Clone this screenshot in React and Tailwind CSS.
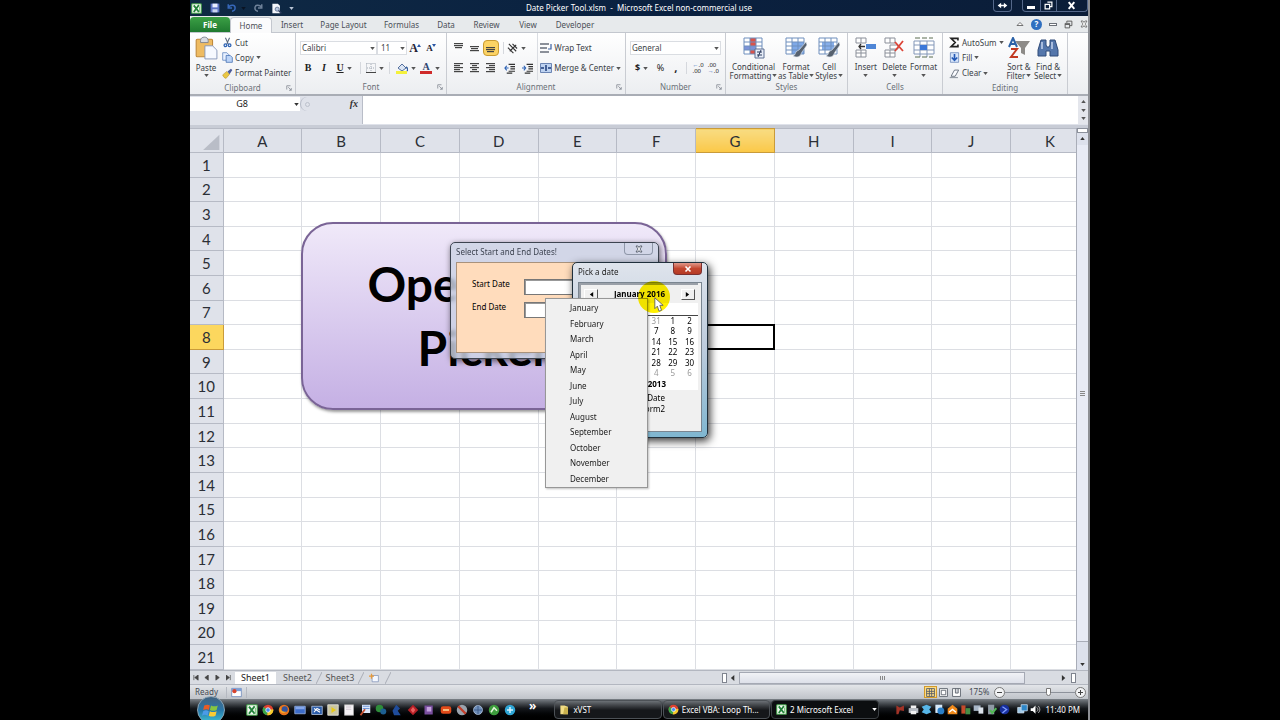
import React from "react";

const COLUMNS = ["A", "B", "C", "D", "E", "F", "G", "H", "I", "J", "K"];
const ROWS = Array.from({ length: 21 }, (_, i) => i + 1);
const MONTHS = [
  "January", "February", "March", "April", "May", "June",
  "July", "August", "September", "October", "November", "December",
];
const WEEKS = [
  [27, 28, 29, 30, 31, 1, 2],
  [3, 4, 5, 6, 7, 8, 9],
  [10, 11, 12, 13, 14, 15, 16],
  [17, 18, 19, 20, 21, 22, 23],
  [24, 25, 26, 27, 28, 29, 30],
  [31, 1, 2, 3, 4, 5, 6],
];

function Caret({ className = "text-[#555]" }) {
  return (
    <svg viewBox="0 0 6 4" className={`h-[3px] w-[5px] shrink-0 ${className}`} aria-hidden="true">
      <path d="M0 0h6L3 4z" fill="currentColor" />
    </svg>
  );
}

function Svg({ size = "size-3", box = 16, children }) {
  return (
    <svg viewBox={`0 0 ${box} ${box}`} className={`${size} shrink-0`} aria-hidden="true" fill="none">
      {children}
    </svg>
  );
}

function ExcelIcon({ size = "size-3" }) {
  return (
    <Svg size={size}>
      <rect x="1" y="1" width="14" height="14" rx="1" fill="#f4fbf2" stroke="#3f9a46" strokeWidth="1.5" />
      <path d="M4 3.5l7.5 9.5M11.5 3L4 13" stroke="#22823a" strokeWidth="2.6" />
      <path d="M12.5 5v8" stroke="#7cc27d" strokeWidth="1.5" />
    </Svg>
  );
}

function SmallButton({ icon, label, caret }) {
  return (
    <button className="flex h-4 items-center gap-[2px] whitespace-nowrap">
      {icon}
      <span>{label}</span>
      {caret && <Caret />}
    </button>
  );
}

function IconButton({ label, width = "w-4", active, children }) {
  return (
    <button
      aria-label={label}
      className={`flex h-4 ${width} items-center justify-center gap-[3px] ${
        active ? "rounded-sm border border-[#c99b32] bg-[#fcd364]" : ""
      }`}
    >
      {children}
    </button>
  );
}

function BigButton({ icon, lines, width }) {
  return (
    <button className={`flex ${width} flex-col items-center`}>
      <span className="flex h-[29px] items-center pt-px">{icon}</span>
      {lines.map((line, i) => (
        <span key={i} className="flex h-[9px] items-center gap-px whitespace-nowrap leading-[9px]">
          {line}
          {i === 1 && <Caret />}
        </span>
      ))}
    </button>
  );
}

function Group({ title, width, launcher, children }) {
  return (
    <section className={`flex ${width} shrink-0 flex-col border-r border-[#c9ccd2]`}>
      <div className="flex h-[48px] px-1">{children}</div>
      <div className="relative flex h-[14px] items-center justify-center text-[#6b7078]">
        {title}
        {launcher && (
          <button aria-label={`${title} settings`} className="absolute right-[3px] top-1">
            <Svg size="size-[6px]" box={8}>
              <path d="M1 6V1h5M3 3l4 4M7 4v3H4" stroke="#7c828c" />
            </Svg>
          </button>
        )}
      </div>
    </section>
  );
}

function Lines({ rows }) {
  return (
    <Svg size="size-[10px]" box={10}>
      {rows.map(([x, y, w], i) => (
        <rect key={i} x={x} y={y} width={w} height="1.2" fill="#444" />
      ))}
    </Svg>
  );
}

function TitleBar() {
  return (
    <header className="flex h-4 items-start justify-between bg-gradient-to-r from-[#0f2944] via-[#0a2140] to-[#0b1d38] text-white">
      <div className="flex h-4 w-[110px] items-center gap-[7px] pl-px">
        <ExcelIcon size="size-[11px]" />
        <button aria-label="Save" className="ml-px">
          <Svg size="size-[10px]">
            <path d="M1 1h14v14H1z" fill="#5b74c4" />
            <path d="M4 1h8v6H4z" fill="#e8efff" />
            <path d="M4 10h8v5H4z" fill="#c9d4ee" />
          </Svg>
        </button>
        <button aria-label="Undo" className="flex items-center gap-1">
          <Svg size="size-[10px]">
            <path d="M2 7c4-5 11-4 11 1 0 3-2 5-5 5M2 2v6h6" stroke="#3667b8" strokeWidth="2.4" />
          </Svg>
          <Caret className="text-[#0a1322]" />
        </button>
        <button aria-label="Redo" className="flex items-center gap-1">
          <Svg size="size-[10px]">
            <path d="M14 7C10 2 3 3 3 8c0 3 2 5 5 5M14 2v6H8" stroke="#6d8098" strokeWidth="2.4" />
          </Svg>
        </button>
        <button aria-label="Print preview" className="ml-px">
          <Svg size="size-[11px]">
            <path d="M2 1h8l3 3v11H2z" fill="#f2f5fb" />
            <circle cx="9" cy="9" r="3" fill="#b8c7de" stroke="#44597d" />
            <path d="M11 11l4 4" stroke="#2c3d5d" strokeWidth="2" />
          </Svg>
        </button>
        <Caret className="text-[#b9c4d4]" />
      </div>
      <h1 className="leading-4">Date Picker Tool.xlsm&nbsp; -&nbsp; Microsoft Excel non-commercial use</h1>
      <div className="flex w-[110px] justify-end">
        <button aria-label="Resize" className="mr-[10px] flex h-3 w-[19px] items-center justify-center rounded-b border border-t-0 border-[#55688a]">
          <Svg size="size-[11px]">
            <path d="M1 8l5-4v3h4V4l5 4-5 4V9H6v3z" fill="#fff" />
          </Svg>
        </button>
        <button aria-label="Minimize" className="flex h-3 w-[19px] items-center justify-center rounded-bl border border-t-0 border-[#55688a]">
          <span className="mt-1 h-[3px] w-2 bg-white" />
        </button>
        <button aria-label="Restore" className="flex h-3 w-[15px] items-center justify-center border-b border-[#55688a]">
          <Svg size="size-[9px]">
            <path d="M6 2h8v8h-3M2 6h8v8H2z" stroke="#fff" strokeWidth="2.2" />
          </Svg>
        </button>
        <button aria-label="Close" className="flex h-3 w-[32px] items-center justify-center rounded-br border border-t-0 border-[#55688a]">
          <Svg size="size-[9px]">
            <path d="M3 2l10 12M13 2L3 14" stroke="#fff" strokeWidth="3.4" />
          </Svg>
        </button>
      </div>
    </header>
  );
}

function RibbonTabs() {
  const tabs = [
    ["Insert", "w-[40px]"], ["Page Layout", "w-[63px]"], ["Formulas", "w-[53px]"], ["Data", "w-[36px]"],
    ["Review", "w-[45px]"], ["View", "w-[38px]"], ["Developer", "w-[56px]"],
  ];
  return (
    <nav className="flex h-[17px] items-end border-b border-[#c3c7ce] bg-[#e7eaec] text-[#4a4f57]">
      <button className="h-[15px] w-10 rounded-t-sm bg-gradient-to-b from-[#3ba045] to-[#1f7a30] font-bold text-white">File</button>
      <button className="-mb-px h-4 w-[42px] rounded-t-sm border border-b-0 border-[#c3c7ce] bg-[#fbfbfc]">Home</button>
      {tabs.map(([label, width]) => (
        <button key={label} className={`h-[15px] ${width} whitespace-nowrap`}>{label}</button>
      ))}
      <div className="ml-auto flex h-4 items-center gap-[7px]">
        <button aria-label="Collapse ribbon">
          <Svg size="size-[8px]"><path d="M2 11l6-6 6 6H2z" stroke="#555" strokeWidth="1.6" fill="#fff" /></Svg>
        </button>
        <button aria-label="Help" className="flex size-[11px] items-center justify-center rounded-full bg-[#2f6fc0] text-[8px] font-bold text-white">?</button>
        <button aria-label="Minimize workbook" className="h-[3px] w-2 border border-[#6b7078] bg-white" />
        <button aria-label="Restore workbook">
          <Svg size="size-[9px]"><path d="M5 5V2h9v8h-4M2 6h8v8H2zM2 8h8" stroke="#555" strokeWidth="1.6" /></Svg>
        </button>
        <button aria-label="Close workbook">
          <Svg size="size-[8px]"><path d="M2 2h4l2 3 2-3h4l-4 6 4 6h-4l-2-3-2 3H2l4-6z" stroke="#555" strokeWidth="1.4" fill="#fff" /></Svg>
        </button>
      </div>
    </nav>
  );
}

function GridIcon({ fill, children }) {
  return (
    <Svg size="size-[22px]" box={22}>
      <rect x="1" y="1" width="18" height="16" fill="#fff" />
      {fill}
      <path d="M1 1h18v16H1zM1 5h18M1 9h18M1 13h18M7 1v16M13 1v16" stroke="#6f8fbd" />
      {children}
    </Svg>
  );
}

const Brush = () => (
  <path d="M21 5l-7 8-2 1c-2 1-1 4-4 5 4 2 7 1 8-2l1-2 5-7z" fill="#56616f" stroke="#dfe5ee" strokeWidth=".6" />
);

const ALIGN = {
  top: [[0, 0, 9], [0, 2, 9], [1, 4, 7]],
  middle: [[0, 3, 9], [1, 5, 7], [0, 7, 9]],
  bottom: [[0, 4, 9], [0, 6, 9], [1, 8, 7]],
  left: [[0, 0, 9], [0, 2, 6], [0, 4, 9], [0, 6, 6], [0, 8, 9]],
  center: [[0, 0, 9], [2, 2, 5], [0, 4, 9], [2, 6, 5], [0, 8, 9]],
  right: [[0, 0, 9], [3, 2, 6], [0, 4, 9], [3, 6, 6], [0, 8, 9]],
};

function Ribbon() {
  return (
    <div className="flex h-[63px] overflow-hidden border-b-2 border-[#a9adb5] bg-gradient-to-b from-white to-[#eceef1] text-[#3b3f46]">
      <Group title="Clipboard" width="w-[106px]" launcher>
        <button className="flex w-[27px] flex-col items-center">
          <span className="flex h-[30px] items-center">
            <Svg size="size-[24px]" box={22}>
              <rect x="2" y="3" width="15" height="16" rx="1" fill="#eebb62" stroke="#c08a3c" />
              <path d="M6 4c0-4 7-4 7 0v2H6z" fill="#d7dae0" stroke="#7d828c" strokeWidth=".8" />
              <path d="M10 9h7l4 4v8H10z" fill="#f6f9ff" stroke="#7e90b4" strokeWidth=".8" />
            </Svg>
          </span>
          <span className="leading-[9px]">Paste</span>
          <span className="pt-[2px]"><Caret /></span>
        </button>
        <div className="flex flex-col pl-[4px] pt-[2px]">
          <SmallButton label="Cut" icon={
            <Svg size="size-[11px]">
              <path d="M5 1l4 9M11 1L7 10" stroke="#5a6a80" strokeWidth="1.6" />
              <circle cx="5" cy="12" r="2" stroke="#2e63b3" strokeWidth="1.8" />
              <circle cx="11" cy="12" r="2" stroke="#2e63b3" strokeWidth="1.8" />
            </Svg>} />
          <SmallButton label="Copy" caret icon={
            <Svg size="size-[11px]">
              <path d="M1 1h6l3 3v8H1z" fill="#e7f0ff" stroke="#4c77b8" />
              <path d="M6 5h6l3 3v7H6z" fill="#bcd4f7" stroke="#2f5fa8" />
            </Svg>} />
          <SmallButton label="Format Painter" icon={
            <Svg size="size-[11px]">
              <path d="M1 10l6-5 4 4-5 6c-2 0-4-2-5-5z" fill="#eac845" stroke="#b6902a" strokeWidth=".8" />
              <path d="M8 5l5-4 2 2-4 6z" fill="#4a5b9a" />
            </Svg>} />
        </div>
      </Group>

      <Group title="Font" width="w-[151px]" launcher>
        <div className="flex flex-col gap-1 pt-[7px]">
          <div className="flex items-center">
            <label className="relative flex h-[14px] w-[77px] items-center justify-end border border-[#dadde2] bg-white pr-px">
              <select aria-label="Font" className="absolute inset-0 appearance-none bg-transparent pl-px leading-3">
                <option>Calibri</option>
              </select>
              <Caret />
            </label>
            <label className="relative flex h-[14px] w-[30px] items-center justify-end border border-[#dadde2] bg-white pr-px">
              <select aria-label="Font size" className="absolute inset-0 appearance-none bg-transparent pl-[3px] leading-3">
                <option>11</option>
              </select>
              <Caret />
            </label>
            <IconButton label="Grow font"><b className="font-['Liberation_Serif',serif] text-[12px] text-[#223]">A</b><span className="-ml-1 mb-1"><Svg size="size-1" box={4}><path d="M0 3l2-3 2 3z" fill="#2b57a5" /></Svg></span></IconButton>
            <IconButton label="Shrink font"><b className="font-['Liberation_Serif',serif] text-[9px] text-[#223]">A</b><span className="-ml-1 mb-1"><Svg size="size-1" box={4}><path d="M0 0l2 3 2-3z" fill="#2b57a5" /></Svg></span></IconButton>
          </div>
          <div className="flex items-center text-[#222]">
            <IconButton label="Bold" width="w-4"><b className="font-['Liberation_Serif',serif] text-[10px]">B</b></IconButton>
            <IconButton label="Italic" width="w-4"><b className="font-['Liberation_Serif',serif] text-[10px] italic">I</b></IconButton>
            <IconButton label="Underline" width="w-6"><b className="font-['Liberation_Serif',serif] text-[10px] underline">U</b><Caret /></IconButton>
            <span className="ml-1 mr-1 h-3 w-px bg-[#d5d8dd]" />
            <IconButton label="Borders" width="w-5">
              <Svg size="size-[10px]" box={10}>
                <path d="M.5 .5h9v9M.5.5v9M5 1v8M1 5h8" stroke="#a3aab5" strokeDasharray="1 1" />
                <path d="M0 9.5h10" stroke="#444" />
              </Svg>
              <Caret />
            </IconButton>
            <span className="ml-1 mr-1 h-3 w-px bg-[#d5d8dd]" />
            <IconButton label="Fill color" width="w-6">
              <Svg size="size-[12px]" box={12}>
                <path d="M2 6l4-4 4 4-4 3z" fill="#dce6f4" stroke="#54709e" />
                <path d="M10 5c2 1 2 3 1 4" stroke="#35609f" strokeWidth="1.4" />
                <path d="M0 9h11v3H0z" fill="#f4f13c" />
              </Svg>
              <Caret />
            </IconButton>
            <IconButton label="Font color" width="w-6">
              <span className="flex w-3 flex-col items-center border-b-[3px] border-[#cf2a2a] font-['Liberation_Serif',serif] text-[10px] font-bold leading-[9px] text-[#2d4470]">A</span>
              <Caret />
            </IconButton>
          </div>
        </div>
      </Group>

      <Group title="Alignment" width="w-[179px]" launcher>
        <div className="flex w-[88px] flex-col gap-1 border-r border-[#dadde2] pt-[7px]">
          <div className="flex items-center">
            <IconButton label="Top align"><Lines rows={ALIGN.top} /></IconButton>
            <IconButton label="Middle align"><Lines rows={ALIGN.middle} /></IconButton>
            <IconButton label="Bottom align" active><Lines rows={ALIGN.bottom} /></IconButton>
            <span className="ml-1 mr-1 h-3 w-px bg-[#d5d8dd]" />
            <IconButton label="Orientation" width="w-4">
              <Svg size="size-[11px]" box={12}>
                <path d="M2 1l8 8M1 5l6 6M6 1l5 5M3 9L10 2" stroke="#333" strokeWidth="1.2" />
              </Svg>
              <Caret />
            </IconButton>
          </div>
          <div className="flex items-center">
            <IconButton label="Align left"><Lines rows={ALIGN.left} /></IconButton>
            <IconButton label="Align center"><Lines rows={ALIGN.center} /></IconButton>
            <IconButton label="Align right"><Lines rows={ALIGN.right} /></IconButton>
            <IconButton label="Decrease indent" width="w-5"><Svg size="size-[11px]" box={12}><path d="M5 1.5h7M7 4h5M7 6.5h5M5 9h7M3 11h6" stroke="#333" strokeWidth="1.3" /><path d="M5 5.5H1M3 3L1 5.5 3 8" stroke="#2c62b5" strokeWidth="1.2" /></Svg></IconButton>
            <IconButton label="Increase indent"><Svg size="size-[11px]" box={12}><path d="M5 1.5h7M7 4h5M7 6.5h5M5 9h7M3 11h6" stroke="#333" strokeWidth="1.3" /><path d="M0 5.5h4M2 3l2 2.5L2 8" stroke="#2c62b5" strokeWidth="1.2" /></Svg></IconButton>
          </div>
        </div>
        <div className="flex flex-col gap-1 pl-[2px] pt-[7px]">
          <SmallButton label="Wrap Text" icon={
            <Svg size="size-[12px]" box={12}>
              <path d="M0 1h9v2H0zM0 5h7v2H0zM0 9h9v2H0z" fill="#8b9099" />
              <path d="M11 2v5H8" stroke="#3a62a4" strokeWidth="1.2" />
            </Svg>} />
          <SmallButton label="Merge & Center" caret icon={
            <Svg size="size-[12px]" box={12}>
              <path d="M.5 1.5h11v9H.5z" fill="#bdd2f0" stroke="#6b85b3" />
              <path d="M1 6h3M8 6h3M6 3v6" stroke="#1d3c7a" strokeWidth="1.5" />
            </Svg>} />
        </div>
      </Group>

      <Group title="Number" width="w-[100px]" launcher>
        <div className="flex w-full flex-col gap-1 pt-[7px]">
          <div className="flex h-4 items-center">
            <label className="relative flex h-[14px] w-[92px] items-center justify-end border border-[#dadde2] bg-white pr-px">
              <select aria-label="Number format" className="absolute inset-0 appearance-none bg-transparent pl-px leading-3">
                <option>General</option>
              </select>
              <Caret />
            </label>
          </div>
          <div className="flex items-center text-[#222]">
            <IconButton label="Currency" width="w-6"><b className="text-[9px]">$</b><Caret /></IconButton>
            <IconButton label="Percent"><span className="text-[9px]">%</span></IconButton>
            <IconButton label="Comma style"><b className="text-[11px] leading-3">,</b></IconButton>
            <span className="mx-[3px] h-3 w-px bg-[#d5d8dd]" />
            <IconButton label="Increase decimal"><span className="text-left text-[6px] leading-[6px]"><span className="text-[#2c62b5]">←</span>.0<br />.00</span></IconButton>
            <IconButton label="Decrease decimal"><span className="text-left text-[6px] leading-[6px]">.00<br /><span className="text-[#2c62b5]">→</span>.0</span></IconButton>
          </div>
        </div>
      </Group>

      <Group title="Styles" width="w-[122px]">
        <BigButton width="w-[47px]" lines={["Conditional", "Formatting"]} icon={
          <GridIcon fill={<><path d="M7 1h6v16H7z" fill="#d9534a" /><path d="M1 9h12v4H1z" fill="#7b92d8" /></>}>
            <path d="M12 12h9v9h-9z" fill="#e7edf8" stroke="#5f7093" />
            <path d="M14 15h5M14 18h5M18 13l-3 7" stroke="#2d3c5e" />
          </GridIcon>} />
        <BigButton width="w-[39px]" lines={["Format", "as Table"]} icon={
          <GridIcon fill={<path d="M7 5h12v12H7z" fill="#7fa9e8" />}><Brush /></GridIcon>} />
        <BigButton width="w-[28px]" lines={["Cell", "Styles"]} icon={
          <GridIcon fill={<path d="M4 5h12v8H4z" fill="#86aeea" />}><Brush /></GridIcon>} />
      </Group>

      <Group title="Cells" width="w-[95px]">
        <BigButton width="w-[28px]" lines={["Insert", ""]} icon={
          <Svg size="size-[22px]" box={22}>
            <path d="M1 1h10v5H1zM6 1v5M1 13h10v7H1zM6 13v7M1 16h10" stroke="#8a8f99" fill="#fff" />
            <path d="M11 7h10v5H11z" fill="#4f86d6" />
            <path d="M10 9.5H4M6 7L4 9.5 6 12" stroke="#333" strokeWidth="1.3" />
          </Svg>} />
        <BigButton width="w-[30px]" lines={["Delete", ""]} icon={
          <Svg size="size-[22px]" box={22}>
            <path d="M1 1h10v5H1zM6 1v5M1 13h10v7H1zM6 13v7M1 16h10M6 8h8v4H6z" stroke="#8a8f99" fill="#fff" />
            <path d="M11 5l8 9M19 4l-8 10" stroke="#dc4437" strokeWidth="1.8" />
          </Svg>} />
        <BigButton width="w-[29px]" lines={["Format", ""]} icon={
          <Svg size="size-[22px]" box={22}>
            <path d="M1 4h20v13H1zM1 8h20M1 13h20M7 4v16M14 4v16" stroke="#8397b8" fill="#fff" />
            <path d="M7 8h7v5H7z" fill="#3c78d8" />
            <path d="M2 1h18M2 20h18" stroke="#5b6c50" strokeDasharray="5 2" />
          </Svg>} />
      </Group>

      <Group title="Editing" width="w-[125px]">
        <div className="flex w-[58px] flex-col pl-[2px] pt-[2px]">
          <SmallButton label="AutoSum" caret icon={<Svg size="size-[11px]"><path d="M13 5V2H3l6 6-6 6h10v-3" stroke="#222" strokeWidth="2.4" /></Svg>} />
          <SmallButton label="Fill" caret icon={
            <Svg size="size-[11px]">
              <path d="M2 1h12v14H2z" fill="#d6e5fb" stroke="#5a7ab0" />
              <path d="M8 3v7M4 8l4 4 4-4" stroke="#2359b5" strokeWidth="2.4" />
            </Svg>} />
          <SmallButton label="Clear" caret icon={
            <Svg size="size-[11px]">
              <path d="M8 3h6l-5 9H3z" fill="#fbfcff" stroke="#56616f" strokeWidth="1.2" />
              <path d="M1 14h12" stroke="#56616f" />
            </Svg>} />
        </div>
        <BigButton width="w-[29px]" lines={["Sort &", "Filter"]} icon={
          <Svg size="size-[22px]" box={22}>
            <path d="M7 4h15l-5 7v7l-4-2v-5z" fill="#8d8b88" />
            <path d="M1 10L5 1l4 9M3 7h5" stroke="#2c62a8" strokeWidth="2" />
            <path d="M3 12h6l-6 8h7" stroke="#c23a22" strokeWidth="2" />
          </Svg>} />
        <BigButton width="w-[30px]" lines={["Find &", "Select"]} icon={
          <Svg size="size-[22px]" box={22}>
            <path d="M4 3h5v5l1 2h2l1-2V3h5l3 10v6h-8v-5H9v5H1v-6z" fill="#5476ab" stroke="#2f4a78" />
            <path d="M5 5v7M15 5v7" stroke="#c3d4ee" strokeWidth="1.5" />
          </Svg>} />
      </Group>
    </div>
  );
}

function FormulaBar() {
  return (
    <div className="flex h-8 items-start border-b-[3px] border-[#c8ccd6] bg-[#dfe2ea]">
      <label className="mt-px flex h-[14px] w-[110px] shrink-0 items-center bg-white pr-px">
        <input aria-label="Name box" defaultValue="G8" className="w-0 flex-1 bg-transparent text-center text-[9px] text-[#222]" />
        <Caret className="text-[#333]" />
      </label>
      <div className="mt-px flex h-[14px] w-[62px] shrink-0 items-center justify-between rounded-l-lg border-l border-[#b4b9c5] px-1">
        <span className="size-[5px] rounded-full border border-[#bcc1cc]" />
        <button aria-label="Insert function" className="font-['Liberation_Serif',serif] text-[10px] font-bold italic text-[#333]">fx</button>
      </div>
      <textarea aria-label="Formula" className="h-[28px] flex-1 resize-none border-l border-[#b9bdc8] bg-white" />
      <div className="flex h-[28px] w-[10px] shrink-0 flex-col items-center justify-between bg-[#e4e6ec] py-1">
        <span className="rotate-180"><Caret /></span>
        <Caret />
        <Caret />
      </div>
    </div>
  );
}

function Sheet() {
  return (
    <table className="h-[542px] w-[calc(100%+14px)] table-fixed border-collapse font-[Lato,sans-serif] text-[15px] leading-4 text-[#2b2f36]">
      <thead>
        <tr className="bg-[#dfe2ea]">
          <th className="h-6 w-[33px] border border-l-0 border-[#b6bac5] p-0">
            <svg viewBox="0 0 32 23" className="block h-[22px] w-[32px]" aria-hidden="true"><path d="M30 5v16H13z" fill="#b9bdc7" /></svg>
          </th>
          {COLUMNS.map((c) => (
            <th key={c} className={`border p-0 font-normal ${c === "G" ? "border-[#c99b3a] bg-gradient-to-b from-[#f8dc81] to-[#fbc845]" : "border-[#b6bac5]"}`}>{c}</th>
          ))}
        </tr>
      </thead>
      <tbody>
        {ROWS.map((r) => (
          <tr key={r}>
            <th className={`border border-l-0 p-0 font-normal ${r === 8 ? "border-[#c99b3a] bg-[#fcd75e]" : "border-[#b6bac5] bg-[#dfe2ea]"}`}>{r}</th>
            {COLUMNS.map((c) => (
              <td key={c} className={c === "G" && r === 8 ? "border border-[#dcdee3] p-0 outline-2 -outline-offset-1 outline-black" : "border border-[#dcdee3] p-0"} />
            ))}
          </tr>
        ))}
      </tbody>
    </table>
  );
}

function StartEndDialog() {
  return (
    <div role="dialog" aria-label="Select Start and End Dates!" className="absolute left-[260px] top-[114px] flex h-[117px] w-[209px] flex-col rounded-[5px] border border-[#3d4450] bg-[#ccd3e4]/80 p-[5px] pt-0 shadow-[1px_2px_6px_rgba(0,0,0,0.6)] backdrop-blur-[2px]">
      <div className="flex h-[19px] items-start justify-between">
        <h2 className="pt-[3px] leading-3 text-[#3d4350]">Select Start and End Dates!</h2>
        <button aria-label="Close dialog" className="flex h-3 w-[29px] items-center justify-center rounded-b-sm border border-t-0 border-[#8f97a8]">
          <Svg size="size-[8px]"><path d="M2 2h4l2 3 2-3h4l-4 6 4 6h-4l-2-3-2 3H2l4-6z" stroke="#444b5a" strokeWidth="1.6" fill="#fff" /></Svg>
        </button>
      </div>
      <div className="flex flex-1 flex-col gap-[7px] border border-[#a9927c] bg-[#ffdcbc] pl-[15px] pt-4 text-black">
        <div className="flex">
          <label htmlFor="start" className="w-[52px] leading-[9px]">Start Date</label>
          <input id="start" className="h-4 w-[72px] border border-[#777] bg-white shadow-[inset_1px_1px_0_#999]" />
        </div>
        <div className="flex">
          <label htmlFor="end" className="w-[52px] leading-[9px]">End Date</label>
          <input id="end" className="h-4 w-[72px] border border-[#777] bg-white shadow-[inset_1px_1px_0_#999]" />
        </div>
      </div>
    </div>
  );
}

function PickDateDialog() {
  const arrow = "flex h-[11px] w-[14px] items-center justify-center border border-white border-b-[#555] border-r-[#555] bg-[#f0f0f0]";
  return (
    <div role="dialog" aria-label="Pick a date" className="absolute left-[382px] top-[134px] flex h-[176px] w-[136px] flex-col rounded-[5px] border border-[#20303c] bg-gradient-to-b from-[#dfe4ec] via-[#bccbdc] to-[#7fb6d0] p-[5px] pt-0 shadow-[2px_3px_8px_rgba(0,0,0,0.8)]">
      <div className="flex h-[19px] items-start justify-between">
        <h2 className="pt-[3px] leading-3 text-[#222]">Pick a date</h2>
        <button aria-label="Close date picker" className="flex h-3 w-[29px] items-center justify-center rounded-b-sm border border-t-0 border-[#7b3030] bg-gradient-to-b from-[#e0988a] via-[#c2462f] to-[#b53a25]">
          <Svg size="size-[8px]"><path d="M3 3l10 10M13 3L3 13" stroke="#fff" strokeWidth="3.2" /></Svg>
        </button>
      </div>
      <div className="flex flex-1 flex-col border border-[#7a8590] bg-[#f0f0f0] pr-[3px] text-black">
        <div className="border-l-2 border-t-2 border-[#9aa0a8] bg-white">
          <div className="flex h-[18px] items-center justify-between bg-[#f0f0f0] px-[3px]">
            <button aria-label="Previous month" className={arrow}><Svg size="size-[5px]" box={6}><path d="M5 0v6L1 3z" fill="#000" /></Svg></button>
            <span className="font-bold">January 2016</span>
            <button aria-label="Next month" className={arrow}><Svg size="size-[5px]" box={6}><path d="M1 0v6l4-3z" fill="#000" /></Svg></button>
          </div>
          <table className="w-full table-fixed border-collapse text-center leading-[10px]">
            <thead className="border-b border-[#444]">
              <tr>{WEEKS[0].map((d) => <th key={d} className="h-3 p-0" />)}</tr>
            </thead>
            <tbody>
              {WEEKS.map((week, w) => (
                <tr key={w}>
                  {week.map((d, i) => {
                    const other = (w === 0 && d > 20) || (w === 5 && d < 20);
                    return <td key={i} className={`p-0 ${w % 2 ? "h-[10px]" : "h-[11px]"} ${other ? "text-[#999]" : ""}`}>{d}</td>;
                  })}
                </tr>
              ))}
            </tbody>
          </table>
          <p className="h-3 pr-8 text-right font-bold leading-3">Today: 1/7/2013</p>
        </div>
        <div className="pr-[33px] pt-[2px] text-right leading-[11px]">
          <p>Start Date</p>
          <p>UserForm2</p>
        </div>
      </div>
    </div>
  );
}

function MonthMenu() {
  return (
    <ul role="menu" className="absolute left-[355px] top-[170px] w-[103px] border border-[#979797] bg-[#f0f0f0] py-px text-[#1a1a1a] shadow-[1px_1px_2px_rgba(0,0,0,0.25)]">
      {MONTHS.map((m, i) => (
        <li key={m} role="none" className={i % 2 ? "h-4" : "h-[15px]"}>
          <button role="menuitem" className="block h-full w-full pl-6 text-left leading-[15px]">{m}</button>
        </li>
      ))}
    </ul>
  );
}

function Pointer() {
  return (
    <>
      <div className="pointer-events-none absolute left-[448px] top-[153px] size-8 rounded-full bg-[#fff000] mix-blend-multiply" />
      <svg viewBox="0 0 12 18" className="pointer-events-none absolute left-[464px] top-[169px] h-[15px] w-[10px]" aria-hidden="true">
        <path d="M1 1v13l3-3 2 6 3-1-2-6h4z" fill="#fff" stroke="#555" />
      </svg>
    </>
  );
}

function VerticalScroll() {
  return (
    <div className="flex w-3 shrink-0 flex-col items-center border-l border-[#a9adb8] bg-[#dde1ec]">
      <span className="h-[5px] w-full border border-[#8c919c] bg-white" />
      <button aria-label="Scroll up" className="flex h-3 w-full rotate-180 items-center justify-center"><Caret className="text-[#333]" /></button>
      <div className="flex w-full flex-1 flex-col items-center justify-center gap-px border-b border-[#a9adb8] bg-[#e8ebf5]">
        <span className="h-px w-[5px] bg-[#888]" /><span className="h-px w-[5px] bg-[#888]" /><span className="h-px w-[5px] bg-[#888]" />
      </div>
      <div className="h-4" />
      <button aria-label="Scroll down" className="flex h-3 w-full items-center justify-center"><Caret className="text-[#333]" /></button>
    </div>
  );
}

function SheetTabs() {
  const nav = ["M1 0v6M6 0L2 3l4 3z", "M5 0L1 3l4 3z", "M1 0l4 3-4 3z", "M0 0l4 3-4 3zM5 0v6"];
  return (
    <div className="flex h-[15px] items-end border-y border-[#b3b7c0] bg-[#d9dce2] text-[9px] text-[#555]">
      <div className="flex h-3 w-[45px] items-center justify-around">
        {nav.map((d, i) => (
          <button key={d} aria-label={["First sheet", "Previous sheet", "Next sheet", "Last sheet"][i]}>
            <Svg size="size-[6px]" box={7}><path d={d} fill="#444" stroke="#444" strokeWidth=".8" /></Svg>
          </button>
        ))}
      </div>
      <button className="h-3 w-[41px] bg-white leading-3 text-[#222]">Sheet1</button>
      <button className="h-3 w-[43px] leading-3">Sheet2</button>
      <svg viewBox="0 0 6 12" className="-mx-[3px] h-3 w-[6px]" aria-hidden="true"><path d="M0 12L6 0" stroke="#a9adb6" /></svg>
      <button className="h-3 w-[42px] leading-3">Sheet3</button>
      <svg viewBox="0 0 6 12" className="-mx-[3px] h-3 w-[6px]" aria-hidden="true"><path d="M0 12L6 0" stroke="#a9adb6" /></svg>
      <button aria-label="Insert sheet" className="ml-2 flex h-3 items-center gap-[6px]">
        <Svg size="size-[10px]"><path d="M5 4h10v10H5z" fill="#f5f8ff" stroke="#6f83ad" /><path d="M4 1v8M0 5h8" stroke="#e79a3a" strokeWidth="2" /></Svg>
        <svg viewBox="0 0 6 12" className="h-3 w-[6px]" aria-hidden="true"><path d="M0 12L6 0" stroke="#a9adb6" /></svg>
      </button>
      <div className="ml-auto flex h-[13px] w-[366px] items-center">
        <span className="h-[10px] w-[5px] border border-[#7f848f] bg-white" />
        <button aria-label="Scroll left" className="flex w-3 justify-center"><Svg size="size-[6px]" box={7}><path d="M5 0v7L1 3.5z" fill="#333" /></Svg></button>
        <div className="flex h-3 flex-1 items-center justify-center gap-px border border-[#a5a9b4] bg-gradient-to-b from-[#f1f2f6] to-[#dde0e9]">
          <span className="h-1 w-px bg-[#888]" /><span className="h-1 w-px bg-[#888]" /><span className="h-1 w-px bg-[#888]" />
        </div>
        <button aria-label="Scroll right" className="ml-9 w-[10px]"><Svg size="size-[6px]" box={7}><path d="M1 0v7l4-3.5z" fill="#333" /></Svg></button>
        <span className="mr-3 h-[10px] w-[5px] border border-[#7f848f] bg-white" />
      </div>
    </div>
  );
}

function StatusBar() {
  return (
    <div className="flex h-[14px] items-center bg-gradient-to-b from-[#e3e5e9] to-[#bfc3c9] text-[#454a52]">
      <span className="w-9 pl-[5px]">Ready</span>
      <button aria-label="Record macro" className="border-x border-[#b5b9c1] px-1">
        <Svg size="size-[11px]"><path d="M1 2h14v12H1z" fill="#fff" stroke="#5b7ab3" /><path d="M1 2h14v4H1z" fill="#7e9fd6" /><circle cx="5" cy="6" r="3" fill="#d8452f" /></Svg>
      </button>
      <div className="ml-auto flex items-center">
        {["M1 1h14v14H1zM1 6h14M1 10h14M6 1v14M10 1v14", "M1 1h14v14H1zM4 4h8v8H4z", "M1 1h14v14H1zM6 1v8h5V1"].map((d, i) => (
          <button key={d} aria-label={["Normal view", "Page layout view", "Page break view"][i]}
            className={`flex h-3 w-[13px] items-center justify-center ${i === 0 ? "border border-[#d29a2a] bg-[#fcdc86]" : ""}`}>
            <Svg size="size-[9px]"><path d={d} stroke="#555b66" strokeWidth="1.5" fill={i ? "#fff" : "none"} /></Svg>
          </button>
        ))}
        <span className="ml-[6px] w-6">175%</span>
        <button aria-label="Zoom out" className="ml-px flex size-[11px] items-center justify-center rounded-full border border-[#777] bg-[#f2f3f5]"><span className="h-px w-[5px] bg-[#444]" /></button>
        <label className="relative flex h-3 w-[70px] items-center">
          <input type="range" aria-label="Zoom" min="0" max="100" defaultValue="62" className="absolute inset-0 w-full opacity-0" />
          <span className="h-px w-full bg-[#8d929b]" />
          <span className="absolute left-[41px] top-[2px] h-2 w-[5px] rounded-b-sm border border-[#777] bg-white" />
        </label>
        <button aria-label="Zoom in" className="mr-[2px] flex size-[11px] items-center justify-center rounded-full border border-[#777] bg-[#f2f3f5]"><Svg size="size-[7px]" box={7}><path d="M3.5 1v5M1 3.5h5" stroke="#444" /></Svg></button>
      </div>
    </div>
  );
}

const LAUNCH = [
  ["Chrome", <><circle cx="8" cy="8" r="7" fill="#e0412f" /><path d="M8 8L2 4a7 7 0 0 0 5 11z" fill="#3aa648" /><path d="M8 8l7-1a7 7 0 0 1-8 8z" fill="#f4cc2d" /><circle cx="8" cy="8" r="3" fill="#4b8df0" stroke="#fff" /></>],
  ["Firefox", <><circle cx="8" cy="8" r="7" fill="#e8731c" /><circle cx="9" cy="7" r="4" fill="#31549f" /><path d="M3 3c0 6 3 8 8 7-3 4-9 2-9-3z" fill="#f5a72b" /></>],
  ["Show desktop", <><path d="M1 3h14v10H1z" fill="#3d6cc8" stroke="#a4bce8" /><path d="M2 4h12v3H2z" fill="#84a7ea" /></>],
  ["Switch windows", <><path d="M1 3h14v11H1z" fill="#2c5da9" stroke="#bfcfe8" /><path d="M4 6l8 5M4 11l4-5 4 2" stroke="#fff" strokeWidth="1.5" /></>],
  ["Media player", <><path d="M1 1h14v14H1z" fill="#c9c5a0" stroke="#eee" /><path d="M6 4v8l6-4z" fill="#e8c916" /></>],
  ["Document", <><path d="M2 1h12v14H2z" fill="#f5f2f5" stroke="#aaa" /><path d="M4 4h7M4 7h7" stroke="#c5b9c5" /></>],
  ["Editor", <><path d="M4 1h11v11H4z" fill="#dce8fa" /><path d="M5 3h9M5 6h9" stroke="#4b7ccf" /><path d="M2 15l6-8" stroke="#c34f31" strokeWidth="2.5" /></>],
  ["Games", <><circle cx="6" cy="6" r="5" fill="#2e8d3a" /><circle cx="11" cy="10" r="4" fill="#1d5f92" /></>],
  ["Messenger", <><path d="M7 1l5 5-3 3 4 6H4l-2-6z" fill="#1f4c9b" /></>],
  ["Card", <><path d="M8 1l7 7-7 7-7-7z" fill="#b71f26" /><path d="M8 4l3 4-3 4-3-4z" fill="#eb6060" /></>],
  ["Notes", <><path d="M2 2h11v12H2z" fill="#7a4f9f" /><path d="M5 4h6v6H5z" fill="#c3a1dd" /></>],
  ["Player", <><rect x="1" y="3" width="14" height="10" rx="3" fill="#e24b1a" /><path d="M4 8h8" stroke="#ffdf9c" strokeWidth="2" /></>],
  ["Tools", <><circle cx="8" cy="8" r="7" fill="#9aa3ad" /><path d="M3 3l10 10" stroke="#c33d28" strokeWidth="3" /></>],
  ["Globe", <><circle cx="8" cy="8" r="6" fill="#6e8eb9" stroke="#bccbe0" /><path d="M8 2v12M2 8h12" stroke="#33527f" /></>],
  ["Share", <><circle cx="8" cy="8" r="7" fill="#3d9d3c" /><path d="M4 11l4-6 4 4" stroke="#e0f4d8" strokeWidth="2" /></>],
  ["Chat", <><circle cx="8" cy="8" r="7" fill="#2fa6d6" /><path d="M4 8h8M8 4v8" stroke="#d6f3ff" strokeWidth="2" /></>],
];

const TRAY = [
  ["Recorder", <path d="M2 15V2l5 3 6-3v8l-6-1-2 6z" fill="#a23327" />],
  ["Printer", <><path d="M1 6h14v7H1z" fill="#b7bcc4" /><path d="M4 2h8v4H4zM4 10h8v5H4z" fill="#f1f1f1" /></>],
  ["Sync", <path d="M1 4l7-3 7 3-3 4 3 4-7 3-7-3 3-4z" fill="#57b6e8" />],
  ["Updates", <><path d="M2 1h10v12H2z" fill="#d7e8f7" /><circle cx="10" cy="10" r="5" fill="#2b7fc7" /></>],
  ["Mail", <><path d="M1 7l7-6 7 6v8H1z" fill="#f08a1b" /><path d="M3 12l5-4 5 4" stroke="#fff" strokeWidth="2" /></>],
  ["Users", <><path d="M2 2h6v12H2z" fill="#c44b2b" /><path d="M8 6h7v9H8z" fill="#458d46" /></>],
  ["Display", <><path d="M1 2h10v8H1z" fill="#a9b7c8" /><path d="M8 5h7v9H8z" fill="#dbe2ea" /></>],
  ["Security", <><path d="M3 1h9v14H3z" fill="#8f9aa4" /><path d="M6 9l3 4 6-7" stroke="#50b853" strokeWidth="3" /></>],
  ["Bluetooth", <><circle cx="8" cy="8" r="7" fill="#182f9d" /><path d="M5 4l6 4-6 5" stroke="#7d9bff" strokeWidth="2" /></>],
];

function Taskbar() {
  return (
    <footer className="flex h-[21px] items-center bg-gradient-to-b from-[#7b8187] via-[#15181c] via-45% to-black text-white">
      <button aria-label="Start" className="ml-[7px] flex size-7 shrink-0 items-center justify-center rounded-full border border-[#8aa4b6] bg-gradient-to-b from-[#41627f] via-[#2876a8] to-[#3fc3d4]">
        <Svg size="size-[18px]">
          <path d="M2 4c2-1 4-1 5 0L6 8C5 7 3 7 1 8z" fill="#e95c25" />
          <path d="M8 4c2 1 4 1 6 0l-1 4c-2 1-4 1-6 0z" fill="#87c540" />
          <path d="M1 9c2-1 3-1 5 0l-1 4c-2-1-3-1-5 0z" fill="#4b9be8" />
          <path d="M7 9c2 1 4 1 6 0l-1 4c-2 1-4 1-6 0z" fill="#fbcb33" />
        </Svg>
      </button>
      <div className="ml-[21px] flex w-[270px] shrink-0 items-center justify-between">
        <button aria-label="Excel"><ExcelIcon size="size-[12px]" /></button>
        {LAUNCH.map(([name, art]) => (
          <button key={name} aria-label={name}><Svg size="size-[12px]">{art}</Svg></button>
        ))}
      </div>
      <button aria-label="More programs" className="ml-[13px] pb-2 text-[12px] font-bold leading-3">»</button>
      <div className="ml-[18px] flex flex-1 gap-px">
        <button className="flex h-[19px] flex-1 items-center gap-[3px] rounded-sm border border-[#4c5156] bg-gradient-to-b from-[#6c7176] to-[#15171a] to-55% pl-1">
          <Svg size="size-[11px]"><path d="M2 2h6l5 2v11H2z" fill="#f1dc84" /><path d="M8 5h5v10H6z" fill="#c8b04c" /></Svg>
          xVST
        </button>
        <button className="flex h-[19px] flex-1 items-center gap-[3px] whitespace-nowrap rounded-sm border border-[#4c5156] bg-gradient-to-b from-[#6c7176] to-[#15171a] to-55% pl-1">
          <Svg size="size-[11px]">{LAUNCH[0][1]}</Svg>
          Excel VBA: Loop Th...
        </button>
        <button className="flex h-[19px] flex-1 items-center gap-[3px] whitespace-nowrap rounded-sm border border-[#3b3f43] bg-[#0c0e10] pl-1 pr-px">
          <ExcelIcon size="size-[11px]" />
          2 Microsoft Excel
          <span className="ml-auto"><Caret className="text-white" /></span>
        </button>
      </div>
      <div className="ml-4 flex items-center gap-[2px]">
        {TRAY.map(([name, art]) => (
          <button key={name} aria-label={name}><Svg size="size-[11px]">{art}</Svg></button>
        ))}
        <button aria-label="Network" className="ml-[5px]"><Svg size="size-[11px]"><path d="M1 5h9v8H1z" fill="#9cc6e6" stroke="#dfeefa" /><path d="M6 1h9v9H6z" fill="#2e86c7" stroke="#dfeefa" /></Svg></button>
        <button aria-label="Volume"><Svg size="size-[11px]"><path d="M1 6h3l4-4v12l-4-4H1z" fill="#fff" /><path d="M10 5c2 2 2 4 0 6M12 3c3 3 3 7 0 10" stroke="#ccc" strokeWidth="1.3" /></Svg></button>
        <time className="ml-[2px] mr-2 whitespace-nowrap">11:40 PM</time>
      </div>
    </footer>
  );
}

export default function App() {
  return (
    <div className="min-h-screen bg-black">
      <main className="mx-auto flex w-full max-w-[900px] flex-col overflow-hidden border-r-2 border-[#8d8f94] bg-white font-['Noto_Sans',sans-serif] text-[8px] leading-3">
        <TitleBar />
        <RibbonTabs />
        <Ribbon />
        <FormulaBar />
        <div className="flex">
          <div className="relative min-w-0 flex-1">
            <div className="overflow-hidden"><Sheet /></div>
            <button className="absolute left-[111px] top-[94px] h-[188px] w-[366px] rounded-[32px] border-2 border-[#7a6496] bg-gradient-to-b from-[#f0e9f9] to-[#c5b0e4] font-[Lato,sans-serif] text-[48px] font-bold leading-[64px] text-black shadow-[1px_2px_3px_rgba(0,0,0,0.4)]">
              Open Date
              <br />
              Picker
            </button>
            <StartEndDialog />
            <PickDateDialog />
            <MonthMenu />
            <Pointer />
          </div>
          <VerticalScroll />
        </div>
        <SheetTabs />
        <StatusBar />
        <Taskbar />
      </main>
    </div>
  );
}
